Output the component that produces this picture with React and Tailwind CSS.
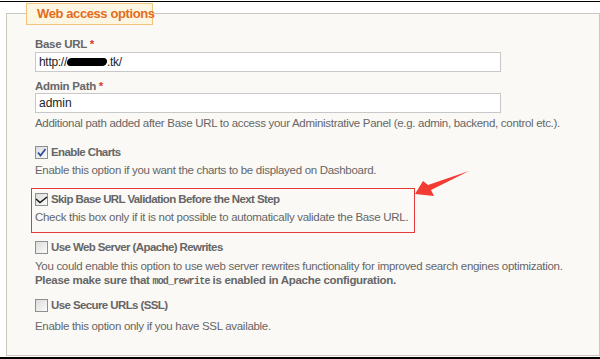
import React from "react";

const font = { fontFamily: '"Liberation Sans", Arial, sans-serif' };

const Checkbox = ({ checked, dark }) => (
  <span className="relative inline-block w-[13px] h-[13px] border border-[#8f8f8f] bg-gradient-to-br from-[#dcdcdc] to-[#fbfbfb] shrink-0">
    {checked && (
      <svg
        viewBox="0 0 13 13"
        className="absolute left-[-1px] top-[-1px] w-[13px] h-[13px]"
      >
        <path
          d={dark ? "M1 6 L5 9.5 L12 4" : "M3 6.5 L5.5 9.5 L10.5 3"}
          fill="none"
          stroke={dark ? "#111" : "#2d4fa8"}
          strokeWidth={dark ? "1.4" : "1.8"}
        />
      </svg>
    )}
  </span>
);

const Option = ({ label, checked, dark }) => (
  <div className="flex items-center gap-[3px] h-[14px] leading-[14px] font-bold text-[11.5px] tracking-[-0.6px] text-[#666] whitespace-nowrap">
    <Checkbox checked={checked} dark={dark} />
    <span>{label}</span>
  </div>
);

const Help = ({ children, className = "" }) => (
  <div className={`h-[14px] leading-[14px] text-[11.5px] tracking-[-0.3px] text-[#666] whitespace-nowrap ${className}`}>
    {children}
  </div>
);

const Label = ({ children, className = "" }) => (
  <div className={`h-[14px] leading-[14px] text-[11.5px] tracking-[-0.3px] font-bold text-[#666] ${className}`}>
    {children} <span className="text-[#e0392b]">*</span>
  </div>
);

export default function App() {
  return (
    <div className="relative w-[600px] h-[359px] bg-white overflow-hidden" style={font}>
      <div className="h-px" />
      <div className="h-px bg-black" />
      <div className="relative mt-[11px] ml-[6px] h-[343px] border border-[#cbc8bf] bg-[#faf9f6]">
        <div className="absolute z-10 left-[19px] top-[-11px] h-[22px] w-[127px] border border-[#f3c47c] bg-[#fdf6e3] pl-[10px] leading-[20px] text-[13px] tracking-[-0.4px] font-bold text-[#e46d1c] whitespace-nowrap">
          Web access options
        </div>

        <div className="pl-[28px] pt-[23px]">
          <Label>Base URL</Label>
          <div className="mt-px h-[20px] w-[466px] border border-[#c8c8c8] bg-white pl-[3px] leading-[18px] text-[12px] tracking-[-0.3px] text-[#222] flex items-center">
            <span>http://</span>
            <span className="inline-block w-[40px] h-[8px] rounded-full bg-black -skew-x-12" />
            <span>.tk/</span>
          </div>

          <Label className="mt-[7px]">Admin Path</Label>
          <div className="h-[20px] w-[466px] border border-[#c8c8c8] bg-white pl-[3px] leading-[18px] text-[12px] text-[#222]">
            admin
          </div>
          <Help className="mt-[3px]">
            Additional path added after Base URL to access your Administrative Panel (e.g. admin, backend, control etc.).
          </Help>

          <div className="mt-[15px]">
            <Option label="Enable Charts" checked />
          </div>
          <Help className="mt-[4px]">
            Enable this option if you want the charts to be displayed on Dashboard.
          </Help>

          <div className="mt-[11px] ml-[-4px] w-[384px] h-[45px] border border-[#e8383a] pl-[3px] pt-[3px]">
            <Option label="Skip Base URL Validation Before the Next Step" checked dark />
            <Help className="mt-[4px]">
              Check this box only if it is not possible to automatically validate the Base URL.
            </Help>
          </div>

          <div className="mt-[7px]">
            <Option label="Use Web Server (Apache) Rewrites" />
          </div>
          <Help className="mt-[5px]">
            You could enable this option to use web server rewrites functionality for improved search engines optimization.
          </Help>
          <Help className="font-bold">
            Please make sure that{" "}
            <code className="font-bold text-[10px] tracking-[-0.8px]" style={{ fontFamily: '"Liberation Mono", "Courier New", monospace' }}>
              mod_rewrite
            </code>{" "}
            is enabled in Apache configuration.
          </Help>

          <div className="mt-[11px]">
            <Option label="Use Secure URLs (SSL)" />
          </div>
          <Help className="mt-[7px]">
            Enable this option only if you have SSL available.
          </Help>
        </div>
      </div>
      <div className="mt-px h-[2px] bg-black" />

      <svg className="absolute left-0 top-0 pointer-events-none" width="600" height="359">
        <polygon
          points="415,194 423,181 428,185 469,171 431,190 434,196"
          fill="#f23b32"
        />
      </svg>
    </div>
  );
}
